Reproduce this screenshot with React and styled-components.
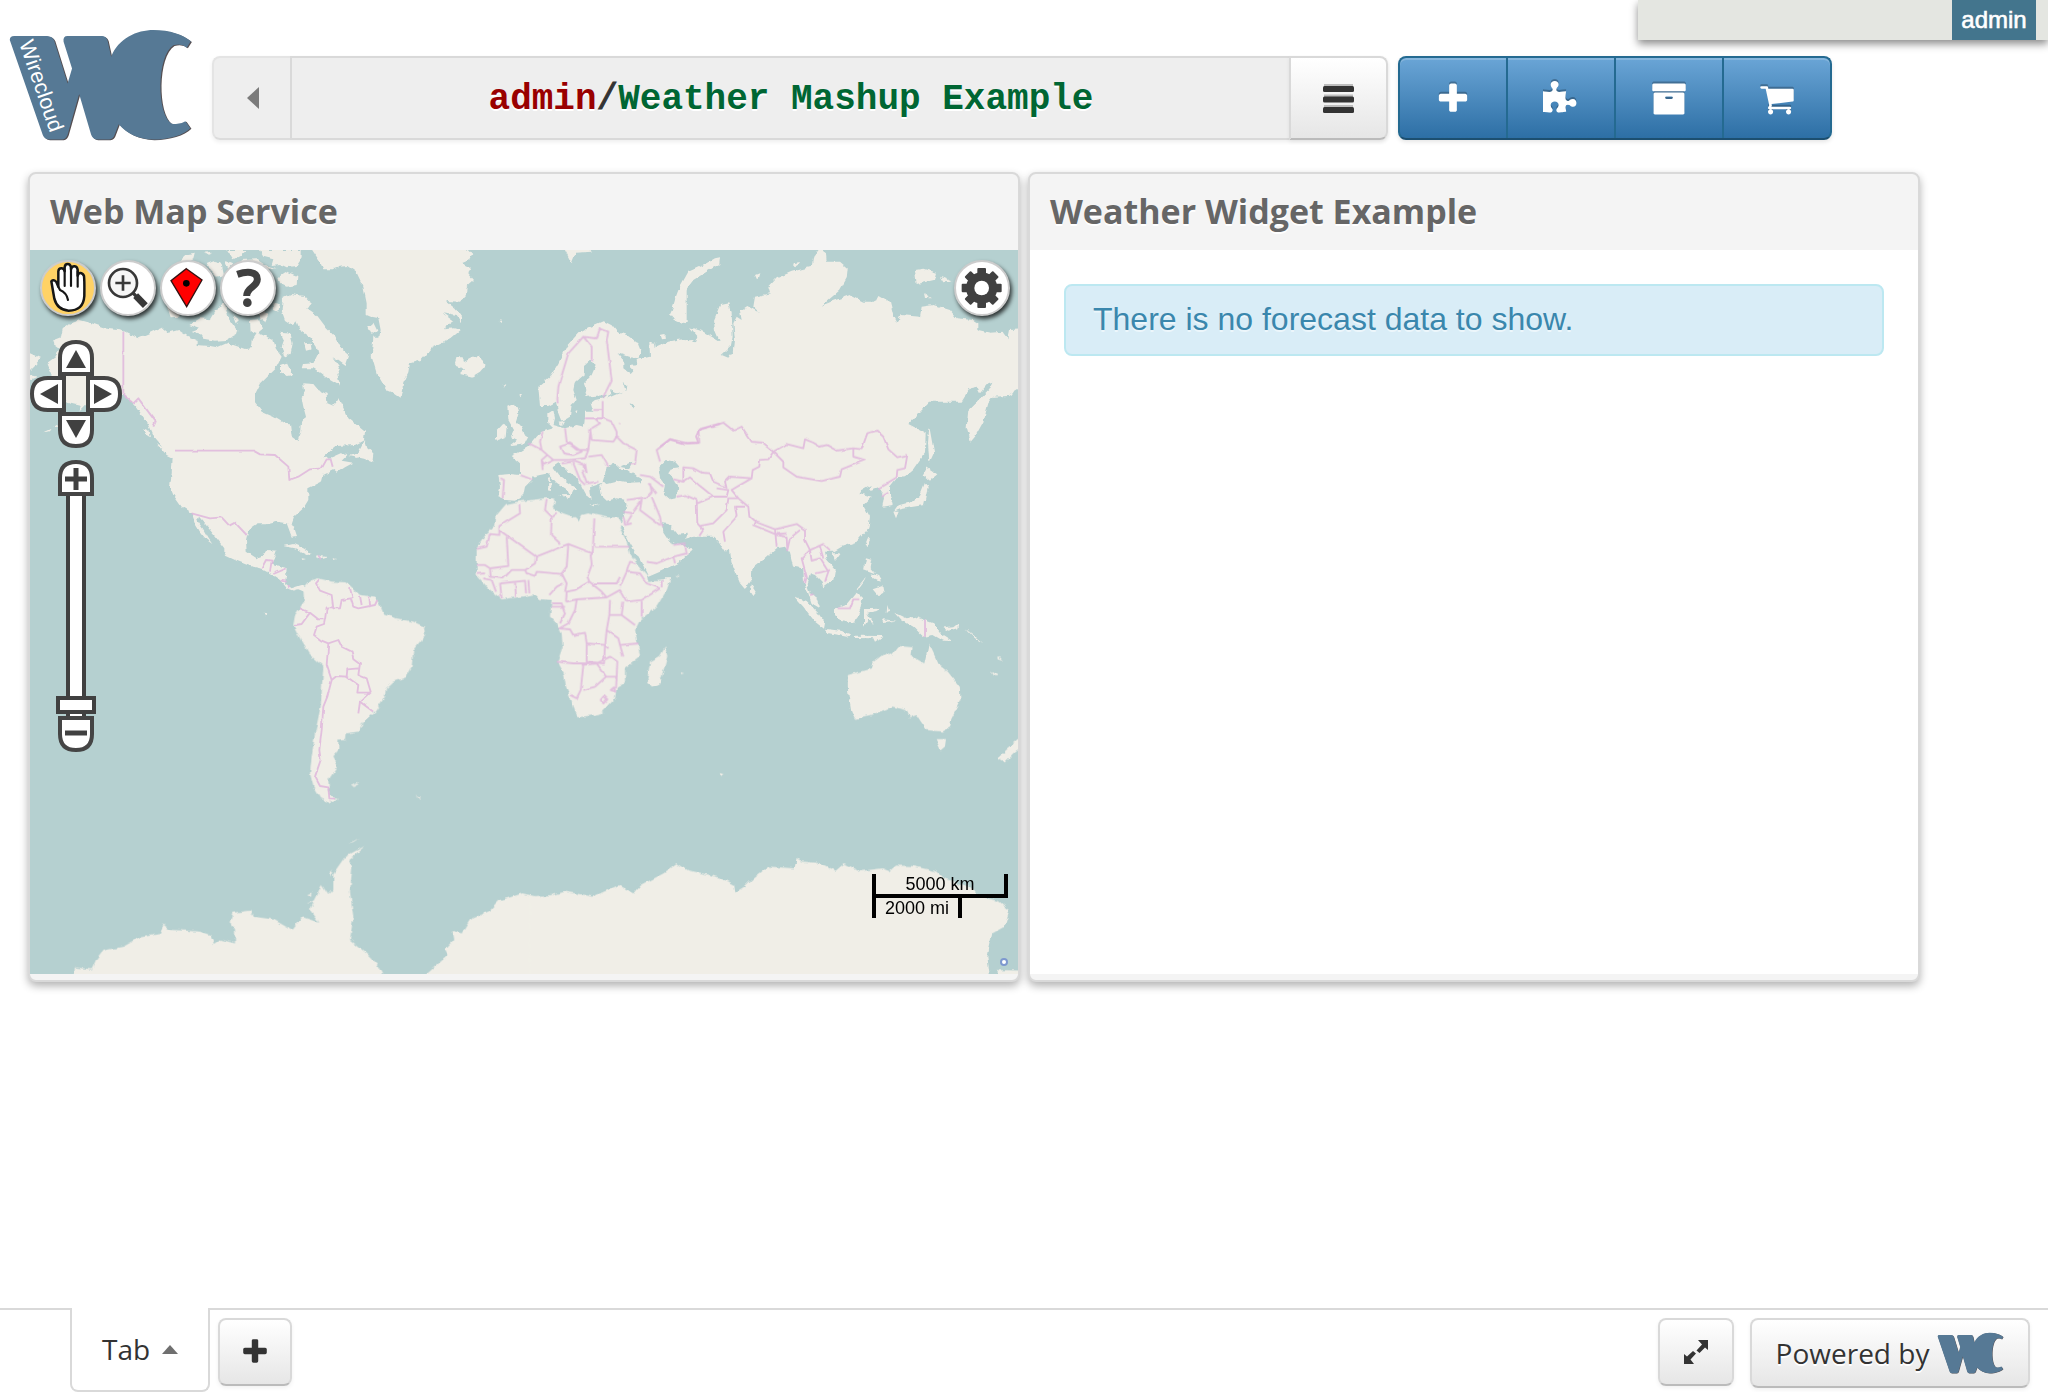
import React from 'react';
import styled, { createGlobalStyle } from 'styled-components';

const GlobalStyle = createGlobalStyle`
  *, *::before, *::after { box-sizing: border-box; }
  body { margin: 0; background: #fff; overflow: hidden; }
`;

const sans = '"Liberation Sans", Arial, Helvetica, sans-serif';
const openSans = '"Open Sans", "Noto Sans", sans-serif';

const Page = styled.div`
  width: 2048px;
  height: 1392px;
  display: flex;
  flex-direction: column;
  background: #fff;
  color: #333;
  font-family: ${openSans};
`;

const UserBar = styled.div`
  position: absolute;
  top: 0;
  left: 1638px;
  width: 410px;
  height: 40px;
  display: flex;
  justify-content: flex-end;
  padding-right: 12px;
  background: #e4e6e1;
  box-shadow: 0 4px 8px rgba(0, 0, 0, 0.45);
`;

const UserName = styled.div`
  width: 84px;
  height: 40px;
  text-align: center;
  background: #43758d;
  color: #fff;
  font: 24px/39px ${sans};
  -webkit-text-stroke: 0.6px #fff;
`;

const Header = styled.header`
  display: flex;
  height: 172px;
  padding: 28px 0 0 8px;
  align-items: flex-start;
`;

const LogoBox = styled.div`
  position: relative;
  width: 204px;
  height: 116px;
`;

const LogoLabel = styled.div`
  position: absolute;
  left: 11px;
  top: -4px;
  width: 92px;
  height: 24px;
  color: #fff;
  font: 21.5px/24px ${sans};
  white-space: nowrap;
  transform-origin: 0 19px;
  transform: rotate(71deg);
`;

const Breadcrumb = styled.div`
  display: flex;
  width: 1176px;
  height: 84px;
  margin-top: 28px;
  border-radius: 8px;
  box-shadow: 0 2px 4px rgba(0, 0, 0, 0.07);
`;

const BackButton = styled.div`
  width: 78px;
  display: flex;
  align-items: center;
  justify-content: center;
  padding-left: 2px;
  background: #eee;
  border: 2px solid #e4e4e4;
  border-right: 0;
  border-bottom-color: #dcdcdc;
  border-radius: 8px 0 0 8px;
`;

const PathTitle = styled.div`
  flex: 1;
  background: #eee;
  border: 2px solid #d9d9d9;
  border-width: 2px 0 2px 2px;
  padding: 2px 0 0 1px;
  text-align: center;
  white-space: pre;
  font: bold 36px/80px "Liberation Mono", "Courier New", monospace;
  text-shadow: 0 2px 0 #fff;
`;

const Owner = styled.span`color: #990000;`;
const Workspace = styled.span`color: #006633;`;
const Slash = styled.span`font-weight: normal; -webkit-text-stroke: 1px #333;`;

const LightButton = styled.div`
  display: flex;
  align-items: center;
  justify-content: center;
  width: ${(p) => p.$w}px;
  height: ${(p) => p.$h}px;
  border: 2px solid #d9d9d9;
  border-bottom-color: #bbb;
  border-radius: ${(p) => p.$radius || '8px'};
  background: linear-gradient(#fff, #e6e6e6);
  box-shadow: 0 2px 4px rgba(0, 0, 0, 0.06);
  color: #333;
  font-size: 28px;
`;

const BlueGroup = styled.div`
  display: flex;
  width: 434px;
  height: 84px;
  margin: 28px 0 0 10px;
  border: 2px solid #246a91;
  border-bottom: 2px solid #1c4f70;
  border-radius: 8px;
  overflow: hidden;
  background: linear-gradient(#6aa5d6, #2d6fa5);
  box-shadow: inset 0 2px 0 rgba(255, 255, 255, 0.2), 0 2px 4px rgba(0, 0, 0, 0.1);
`;

const BlueButton = styled.div`
  flex: 1;
  display: flex;
  align-items: center;
  justify-content: center;
  padding-top: 2px;
  & + & { border-left: 2px solid #246a91; }
  svg { filter: drop-shadow(0 -2px 0 rgba(0, 0, 0, 0.25)); }
`;

const Widgets = styled.main`
  display: flex;
  gap: 8px;
  padding-left: 28px;
  flex: 1;
  align-items: flex-start;
`;

const Widget = styled.section`
  width: ${(p) => p.$w}px;
  height: 810px;
  display: flex;
  flex-direction: column;
  border: 2px solid #d9d9d9;
  border-radius: 8px;
  overflow: hidden;
  background: #f4f4f4;
  box-shadow: 0 4px 8px rgba(0, 0, 0, 0.3);
`;

const WidgetTitle = styled.h2`
  margin: 0;
  height: 76px;
  padding-left: 20px;
  color: #666;
  font: bold 34px/74px ${openSans};
  text-shadow: 0 2px 0 #fff;
  white-space: nowrap;
`;

const WidgetBody = styled.div`
  position: relative;
  height: 724px;
  background: #fff;
  padding: ${(p) => (p.$map ? 0 : '34px 34px')};
`;

const Alert = styled.div`
  height: 72px;
  padding-left: 27px;
  border: 2px solid #bce8f1;
  border-radius: 8px;
  background: #d9edf7;
  color: #3a87ad;
  font: 32px/66px ${sans};
  text-shadow: 0 2px 0 rgba(255, 255, 255, 0.5);
`;

const MapTools = styled.div`
  position: absolute;
  top: 10px;
  ${(p) => (p.$right ? 'right: 8px;' : 'left: 10px;')}
  display: flex;
  gap: 4px;
`;

const RoundTool = styled.div`
  width: 56px;
  height: 56px;
  border-radius: 50%;
  border: 2px solid #ccc;
  background: ${(p) => (p.$active ? '#ffd266' : '#fff')};
  box-shadow: 2px 3px 4px rgba(0, 0, 0, 0.75);
  svg { display: block; margin: -2px; }
`;

const Navigation = styled.div`
  position: absolute;
  left: 0;
  top: 90px;
`;

const ScaleLine = styled.div`
  position: absolute;
  left: 842px;
  top: 624px;
  color: #000;
  font: 18px/20px ${sans};
  text-align: center;
`;

const ScaleTop = styled.div`
  width: 136px;
  height: 24px;
  border: 4px solid #000;
  border-top: 0;
`;

const ScaleBottom = styled.div`
  width: 90px;
  height: 20px;
  border: 4px solid #000;
  border-width: 0 4px;
`;

const MapDot = styled.div`
  position: absolute;
  left: 970px;
  top: 708px;
  width: 8px;
  height: 8px;
  border: 2px solid #7d98cf;
  border-radius: 50%;
  background: #fff;
`;

const Footer = styled.footer`
  display: flex;
  height: 84px;
  align-items: flex-start;
`;

const Rule = styled.div`
  width: ${(p) => p.$w || 'auto'};
  flex: ${(p) => (p.$w ? 'none' : 1)};
  height: 84px;
  border-top: 2px solid #d9d9d9;
  display: flex;
  padding: 8px 18px 0 8px;
`;

const Tab = styled.div`
  width: 140px;
  height: 84px;
  display: flex;
  align-items: center;
  gap: 12px;
  padding: 0 0 0 30px;
  border: 2px solid #d9d9d9;
  border-top: 0;
  border-radius: 0 0 8px 8px;
  font-size: 28px;
`;

const Spacer = styled.div`flex: 1;`;

const Powered = styled.div`
  display: flex;
  margin-left: 16px;
  svg { margin-left: 8px; }
  span { text-shadow: 0 2px 0 #fff; }
`;

function Glyph({ d, size = 36, color = '#fff' }) {
  return <svg width={size} height={size} viewBox="0 0 1792 1792"><path fill={color} d={d} /></svg>;
}

const plus = 'M1600 736v192q0 40-28 68t-68 28h-416v416q0 40-28 68t-68 28h-192q-40 0-68-28t-28-68v-416h-416q-40 0-68-28t-28-68v-192q0-40 28-68t68-28h416v-416q0-40 28-68t68-28h192q40 0 68 28t28 68v416h416q40 0 68 28t28 68z';
const puzzle = 'M1664 1098q0 81-44.5 135t-123.5 54q-41 0-77.5-17.5t-59-38-56.5-38-71-17.5q-110 0-110 124 0 39 16 115t15 115v5q-22 0-33 1-34 3-97.5 11.5t-115.5 13.5-98 5q-61 0-103-26.5t-42-83.5q0-37 17.5-71t38-56.5 38-59 17.5-77.5q0-79-54-123.5t-135-44.5q-84 0-143 45.5t-59 127.5q0 43 15 83t33.5 64.5 33.5 53 15 50.5q0 45-46 89-37 35-117 35-95 0-245-24-9-2-27.5-4t-27.5-4l-13-2q-1 0-3-1-2 0-2-1v-1024q2 1 17.5 3.5t34 5 21.5 3.5q150 24 245 24 80 0 117-35 46-44 46-89 0-22-15-50.5t-33.5-53-33.5-64.5-15-83q0-82 59-127.5t144-45.5q80 0 134 44.5t54 123.5q0 41-17.5 77.5t-38 59-38 56.5-17.5 71q0 57 42 83.5t103 26.5q64 0 180-15t163-17v2q-1 2-3.5 17.5t-5 34-3.5 21.5q-24 150-24 245 0 80 35 117 44 46 89 46 22 0 50.5-15t53-33.5 64.5-33.5 83-15q82 0 127.5 59t45.5 143z';
const archive = 'M1088 832q0-26-19-45t-45-19h-256q-26 0-45 19t-19 45 19 45 45 19h256q26 0 45-19t19-45zm576-192v960q0 26-19 45t-45 19h-1408q-26 0-45-19t-19-45v-960q0-26 19-45t45-19h1408q26 0 45 19t19 45zm64-448v256q0 26-19 45t-45 19h-1536q-26 0-45-19t-19-45v-256q0-26 19-45t45-19h1536q26 0 45 19t19 45z';
const cart = 'M704 1536q0 52-38 90t-90 38-90-38-38-90 38-90 90-38 90 38 38 90zm896 0q0 52-38 90t-90 38-90-38-38-90 38-90 90-38 90 38 38 90zm128-1088v512q0 24-16.5 42.5t-40.5 21.5l-1044 122q13 60 13 70 0 16-24 64h920q26 0 45 19t19 45-19 45-45 19h-1024q-26 0-45-19t-19-45q0-11 8-31.5t16-36 21.5-40 15.5-29.5l-177-823h-204q-26 0-45-19t-19-45 19-45 45-19h256q16 0 28.5 6.5t19.5 15.5 13 24.5 8 26 5.5 29.5 4.5 26h1201q26 0 45 19t19 45z';

const mark = 'M22 120Q22 108 32 108H106Q118 109 122 122L152 250L162 205L143 125Q141 108 152 108H230Q240 110 242 122L250 170C266 115 308 90 345 90C382 90 412 104 429 124L420 143Q408 129 390 136C352 168 352 340 385 370Q402 376 417 363L428 384C412 405 380 418 345 418C310 416 285 400 267 372L258 403Q255 416 246 418H218Q208 416 205 404L178 282L152 404Q149 416 141 418H110Q99 416 96 404Z';

function Logo({ width, height }) {
  return (
    <svg width={width} height={height} viewBox="18 84 416 340" preserveAspectRatio="none">
      <path d={mark} transform="translate(2.500 2)" fill="#554e51" />
      <path d={mark} fill="#567995" />
    </svg>
  );
}

function WorldMap() {
  return (
    <svg width="988" height="724" viewBox="30 250 988 724" style={{ display: 'block' }}>
      <defs>
        <filter id="coast" filterUnits="userSpaceOnUse" x="10" y="230" width="1030" height="770">
          <feTurbulence type="fractalNoise" baseFrequency="0.16" numOctaves="2" seed="4" result="n" />
          <feDisplacementMap in="SourceGraphic" in2="n" scale="4.500" xChannelSelector="R" yChannelSelector="G" />
          <feGaussianBlur stdDeviation="0.7" />
        </filter>
        <filter id="frontier" filterUnits="userSpaceOnUse" x="10" y="230" width="1030" height="770">
          <feTurbulence type="fractalNoise" baseFrequency="0.12" numOctaves="1" seed="9" result="n" />
          <feDisplacementMap in="SourceGraphic" in2="n" scale="3" xChannelSelector="R" yChannelSelector="G" />
          <feGaussianBlur stdDeviation="0.4" />
        </filter>
      </defs>
      <rect x="30" y="250" width="988" height="724" fill="#b5d0d0" />
      <g filter="url(#coast)" fill="#f0eee7">
        {/* North America */}
        <g transform="translate(20 240) scale(.33333)">
          <path d="M80 370L105 352 122 325 95 305 122 295 128 268 150 250 180 240 215 250 250 262 300 268 325 280 352 294 390 278 425 262 445 278 475 270 502 288 530 300 530 315 570 318 592 322 620 310 640 315 675 327 695 325 698 300 712 278 740 290 760 300 770 330 785 350 770 380 750 400 735 415 720 430 705 460 705 490 725 515 760 530 790 548 810 550 815 590 832 602 840 580 842 555 858 530 850 500 845 475 852 450 850 430 880 432 895 450 920 462 922 490 940 497 958 475 970 500 985 535 1010 555 1035 575 1032 600 1005 615 950 618 925 638 905 655 935 652 962 640 985 642 965 662 1000 668 975 682 950 698 940 690 910 705 905 725 865 745 865 780 850 805 822 830 815 850 828 888 815 890 800 850 770 845 740 853 710 853 685 870 678 900 680 935 710 955 735 945 745 930 770 932 762 955 755 970 800 985 798 1010 795 1030 815 1045 845 1035 860 1045 855 1056 835 1048 820 1052 800 1045 780 1020 762 1008 740 995 720 985 690 978 650 962 613 945 613 925 590 895 570 870 550 845 537 830 532 842 550 868 565 895 577 912 560 900 540 875 528 855 515 820 485 800 460 765 450 740 455 700 458 655 430 625 400 590 380 545 345 495 310 465 270 460 230 465 200 492 175 518 182 498 140 488 110 440Z" />
          <path d="M30 340L62 355 45 375 30 390ZM30 405L55 410 30 420ZM70 578L95 566 90 574ZM100 562L125 545 115 560ZM372 565L385 570 390 592 380 585ZM410 612L440 630 460 655 440 645ZM792 918L820 912 850 925 875 940 860 942 825 925ZM890 946L925 952 905 958 888 952ZM1035 600L1008 650 1035 656 1057 665 1060 640 1042 625ZM728 1118L742 1120 736 1126ZM845 955L858 957 847 960ZM938 955L952 957 940 960ZM1015 640L985 648 1015 655Z" />
        </g>
        {/* Arctic archipelago */}
        <g transform="translate(100 240) scale(.33333)">
          <path d="M268 255L300 235 330 238 350 205 375 190 385 235 412 272 408 285 380 300 345 302 310 296 300 284 275 276 300 266ZM198 190L240 205 238 230 212 232ZM548 175L575 162 612 168 632 190 622 205 650 225 680 265 705 290 722 322 748 345 737 378 715 362 698 352 720 382 712 402 720 438 690 420 665 400 640 385 608 385 612 372 640 370 655 340 650 320 630 290 600 270 590 245 578 255 555 240 545 212ZM540 275L570 278 578 310 572 342 552 350 545 320 552 300ZM540 375L560 368 578 405 560 408 540 395ZM450 240L478 238 486 268 470 282 452 275ZM535 112L560 95 592 108 590 135 560 140 540 132ZM478 30L605 30 605 55 590 78 560 82 540 72 515 75 520 58 490 50ZM240 62L262 42 285 38 280 58 262 68ZM312 38L335 35 328 48ZM320 72L345 62 365 75 372 105 350 110 330 90ZM382 30L440 30 425 45 400 58ZM375 60L400 70 385 85ZM420 60L470 58 495 75 530 85 480 88ZM520 185L540 190 535 215 522 210ZM490 165L515 150 520 180 500 185ZM612 310L632 308 635 328 618 332ZM480 205L505 225 495 245 480 235ZM400 225L420 240 410 250Z" />
        </g>
        {/* Greenland, Europe and Iceland */}
        <g transform="translate(340 240) scale(.33333)">
          <path d="M-90 20L-62 62 -50 88 -20 88 0 80 22 78 50 98 70 140 80 190 80 225 92 230 115 235 122 270 118 290 100 290 95 350 110 400 140 450 160 458 182 473 190 430 205 400 210 370 245 360 275 325 330 298 365 268 345 262 310 265 340 243 308 220 350 228 366 250 366 230 345 205 318 183 360 185 378 165 380 140 402 120 385 100 395 85 365 70 388 60 397 45 375 20Z" />
          <path d="M85 262L100 248 112 272 95 285ZM345 368L350 352 368 352 372 366 395 354 420 350 437 375 420 395 395 410 360 402 375 388 348 378ZM670 20L745 20 755 35 708 38 695 70 685 50ZM990 220L1005 190 1020 155 1040 140 1040 250 1015 240ZM962 285L975 283 978 296 966 298Z" />
          <path d="M600 498L595 440 630 410 655 370 680 318 715 280 750 260 790 243 815 256 830 275 860 285 895 310 905 335 895 355 870 352 833 340 850 360 850 385 872 402 880 394 868 378 892 376 890 360 930 350 928 305 945 308 950 340 980 318 1000 307 1060 300 1060 890 1020 900 990 912 1025 915 1060 930 1020 965 960 995 925 1010 915 990 900 960 870 910 850 870 845 850 855 820 860 790 855 780 830 775 800 782 782 765 778 740 788 728 770 735 750 742 755 780 738 766 725 742 715 715 690 698 672 682 655 670 638 682 655 705 680 725 710 745 697 750 690 766 680 748 650 728 625 700 600 705 578 710 575 720 555 740 550 765 525 782 495 780 475 772 480 740 475 705 510 702 540 705 540 670 515 648 540 635 565 620 590 590 605 575 640 565 625 550 625 520 640 510 645 535 640 555 675 565 710 555 732 560 735 530 735 515 760 515 752 490 765 480 790 475 802 464 740 470 732 430 755 405 768 375 750 362 735 375 735 400 705 425 700 450 710 480 695 495 690 530 665 545 655 520 648 485 625 498Z" />
          <path d="M502 500L525 490 535 520 528 542 545 560 550 580 565 590 555 610 510 616 530 600 513 592 522 570 505 540ZM468 572L490 548 500 560 497 592 468 602ZM624 714L633 712 632 728 626 728ZM624 733L635 732 632 752 625 752ZM658 766L688 765 682 778ZM748 792L778 795 760 799ZM655 548L672 545 665 558ZM706 510L712 508 710 518ZM476 240L485 238 482 246ZM488 432L496 434 492 440ZM538 463L546 466 541 472Z" />
        </g>
        {/* Africa */}
        <g transform="translate(460 400) scale(.33333)">
          <path d="M138 312L175 305 255 295 280 295 285 305 278 325 310 340 345 352 355 362 365 345 385 340 440 352 475 352 490 375 478 382 500 425 510 460 530 490 560 525 565 546 610 540 632 535 620 570 590 620 540 660 525 690 535 740 540 770 495 805 495 850 470 865 465 895 425 940 400 945 355 952 345 930 330 890 318 860 312 820 293 785 308 740 305 700 290 670 270 650 275 600 240 597 225 583 185 590 125 598 85 565 50 525 50 490 50 445 80 400 105 375 110 345Z" />
          <path d="M615 742L622 768 600 850 575 860 562 840 570 785 600 768ZM648 526L656 529 650 533Z" />
        </g>
        {/* Asia */}
        <g transform="translate(660 240) scale(.33333)">
          <path d="M-20 325L25 305 50 300 75 297 105 307 112 288 90 262 130 275 180 305 165 270 162 240 180 195 205 190 215 220 218 290 212 320 185 345 205 353 222 330 225 300 220 250 230 230 245 240 240 212 262 198 300 220 280 200 285 170 330 160 325 142 350 115 395 95 455 80 460 50 480 25 498 40 500 65 540 65 563 85 560 115 540 150 485 197 520 182 570 165 610 185 645 185 655 165 690 185 700 225 712 248 722 225 780 230 785 200 820 195 870 210 890 235 940 240 955 250 955 270 990 278 1030 275 1045 295 1050 270 1090 268 1090 440 1045 468 1000 470 985 490 970 545 945 590 932 605 920 560 925 510 955 480 985 450 997 425 985 430 960 460 950 440 930 445 905 485 850 485 810 485 745 552 780 570 797 580 795 640 760 690 735 712 710 715 690 740 690 765 698 795 670 800 675 770 655 745 625 755 635 735 595 758 635 770 610 795 630 830 625 865 590 905 545 920 520 935 495 935 500 960 525 990 520 1020 490 1042 485 1025 465 1005 450 1000 440 1030 450 1060 470 1075 480 1105 455 1090 445 1060 432 1030 430 985 400 980 390 940 375 920 350 925 310 960 277 985 275 1020 255 1048 240 1030 215 970 210 930 195 935 175 905 160 890 80 890 0 870 -20 850Z" />
          <path d="M180 52L178 72 140 95 100 120 70 160 68 215 80 250 50 245 33 220 45 180 60 140 85 95 130 75 165 55ZM765 90L790 86 828 98 822 120 770 132ZM840 110L878 125 850 127ZM792 160L816 175 795 174ZM808 560L822 638 808 668 804 610ZM800 682L832 703 810 722 788 705ZM795 728L803 745 792 795 750 802 720 808 702 815 716 796 755 785 780 765ZM700 815L716 815 708 835ZM625 890L633 900 622 922 617 910ZM518 940L540 940 525 960ZM618 955L636 960 632 985 645 1000 612 988ZM638 1048L667 1038 671 1060 655 1068ZM632 1000L660 1010 662 1025 640 1015ZM590 1045L618 1010 612 1022 594 1048ZM275 1033L290 1055 280 1068 272 1055ZM403 1070L440 1083 475 1120 495 1150 492 1166 465 1145 430 1100ZM495 1166L540 1172 575 1184 560 1190 500 1178ZM585 1187L670 1188 645 1205 640 1195 585 1194ZM525 1105L560 1095 590 1058 607 1075 600 1110 585 1148 540 1140 525 1125ZM612 1108L658 1106 655 1112 622 1118 642 1155 625 1138 612 1160ZM682 1095L688 1115 680 1118ZM668 1138L710 1142 672 1146ZM706 1118L740 1135 765 1130 820 1150 840 1180 877 1203 850 1202 820 1185 790 1190 760 1160 725 1140ZM850 1165L880 1162 895 1150 892 1165 865 1172ZM915 1165L940 1185 970 1210 945 1195ZM2 285L18 283 12 298ZM285 105L298 100 292 120ZM400 70L420 66 410 82ZM0 1050L15 1015 30 1015 15 1060Z" />
        </g>
        {/* South America */}
        <g transform="translate(250 520) scale(.33333)">
          <path d="M160 205L180 182 205 175 245 185 290 187 330 225 375 230 393 262 400 280 440 295 490 305 522 320 525 345 490 390 485 440 468 472 430 485 408 505 405 530 375 575 340 605 325 635 290 640 288 660 265 662 265 690 247 712 262 740 235 780 238 825 264 838 238 848 210 835 190 800 180 760 185 710 195 640 212 560 220 440 180 405 150 355 130 315 135 285 162 245Z" />
          <path d="M302 793L325 786 328 793 312 802ZM500 824L515 832 512 840Z" opacity=".8" />
        </g>
        {/* Oceania and eastern Antarctica */}
        <g transform="translate(500 640) scale(.3444 .33333)">
          <path d="M1010 105L1080 85 1085 65 1120 38 1140 45 1160 18 1198 22 1195 48 1232 70 1245 10 1275 75 1300 95 1335 140 1337 180 1310 235 1307 262 1285 275 1240 270 1222 245 1210 225 1190 232 1180 210 1140 200 1085 222 1030 237 1020 215 1010 150ZM1265 297L1295 297 1292 320 1280 330ZM1520 285L1475 325 1445 355 1465 368 1490 340 1520 315ZM1425 92L1447 108 1435 108ZM1447 45L1460 62 1448 55ZM638 396L650 400 642 408ZM525 97L535 100 526 102Z" />
          <path d="M0 782L65 760 100 768 150 765 190 755 270 770 345 735 390 760 410 735 475 700 515 670 545 690 640 713 680 735 683 757 710 740 735 715 780 680 855 685 862 655 880 665 930 670 975 692 1000 670 1045 693 1110 685 1130 693 1150 677 1200 678 1270 695 1290 715 1360 740 1400 770 1450 785 1480 810 1465 860 1430 880 1415 950 1425 1030 0 1030ZM1445 990L1520 992 1520 1030 1445 1030Z" />
        </g>
        {/* Western Antarctica */}
        <g transform="translate(20 740) scale(.33333)">
          <path d="M160 720L165 682 215 688 230 655 248 632 310 620 360 592 420 582 430 553 450 570 500 572 540 575 570 585 582 612 600 598 645 610 645 570 632 550 640 518 690 512 700 530 760 538 815 570 835 545 850 532 898 548 870 510 890 470 905 435 925 465 940 450 940 400 975 350 1035 318 1015 335 985 360 997 380 990 455 1000 530 990 600 1040 640 1070 670 1095 720ZM1200 720L1285 645 1275 628 1300 600 1295 572 1325 580 1350 540 1410 512 1440 480 1500 470 1530 466 1530 720ZM860 490L888 480 880 488ZM925 400L938 388 930 410ZM985 310L1020 293 1000 306ZM862 462L875 458 872 468Z" />
        </g>
        {/* Inland seas */}
        <g transform="translate(340 240) scale(.33333)" fill="#b5d0d0">
          <path d="M800 680L820 668 835 682 845 690 862 690 875 700 905 715 900 727 870 728 840 722 800 732 788 728 795 705ZM838 680L882 662 868 686ZM955 685L980 660 1005 665 1020 682 995 685 985 700 1000 720 1015 740 1010 775 990 778 970 760 975 735 960 715ZM965 850L985 852 1010 882 1040 878 1040 892 1018 908 990 905 970 875ZM848 425L862 440 858 455ZM810 448L832 460 815 468ZM872 490L885 495 878 504ZM812 465L850 455 805 475Z" />
        </g>
      </g>
      <g filter="url(#frontier)" fill="none" stroke="#dfb6dc" strokeOpacity=".85" strokeWidth="5.500" strokeLinejoin="round">
        <g transform="translate(20 240) scale(.33333)">
          <path d="M310 275V465L340 490 355 475 407 545 400 560M465 632H700L720 643 765 645 805 680 808 720 835 710 870 688 905 685 920 658 932 658 938 680M515 820L570 835 605 832 628 857 645 848 680 885M725 985L738 960 755 962 750 995M760 1002L800 985M782 1022L800 1025M805 1035L808 1045" />
        </g>
        <g transform="translate(250 520) scale(.33333)">
          <path d="M208 178L198 190 210 212 245 225 250 265 270 265 275 240 302 235 310 260 325 265 375 255 382 240M300 205L308 235M330 228L335 255M358 230L360 255M150 265L180 278 205 298 225 298 230 262 250 262M135 315L155 312 180 278M225 298L222 312 200 320 192 345 215 362 235 370 265 360 275 380 305 395 310 415 330 430 325 465 350 475 362 515 330 545 370 575M235 370L230 435 245 480 232 530 220 560 215 630 208 690 212 720 195 770 210 798 235 802 238 835 255 836M245 480L260 468 290 470 292 448 325 445M290 470L325 495 322 518 360 518M330 545L325 580M205 105L212 118" />
        </g>
        <g transform="translate(460 400) scale(.33333)">
          <path d="M178 312L180 340 118 378 118 405 90 402 80 440 50 447M118 390L228 470 325 432 398 460 403 355M260 297L255 330 275 350 273 405 300 430M275 350L290 338M405 440H508M398 460L392 465 395 495 382 530 388 545 345 570 320 575 318 605M325 432L320 500 305 520 320 550 315 575M228 470L225 490 195 510 200 520 225 528 230 515 305 522M140 410L145 498 90 505 75 495 50 495M90 505L92 530 130 535 155 510 195 510M50 522L75 520M70 535L95 540 108 575M120 548L125 595M165 545L168 590M122 550L195 542 198 580M205 540L208 580M268 585L290 560 310 550M275 610H305L315 640 300 670M275 620H315M318 605L350 598 440 592 425 575 388 545M350 600L345 630 325 670 298 685 330 688 340 705 375 698 380 730 435 735 432 790 380 785V730M293 785L340 790 415 790M370 795L362 870 350 895 330 885M365 795L410 790 438 830 405 860 370 870M410 790L450 770 472 785 470 830 438 830M440 592L480 570 500 605 545 600 600 565 560 550 540 520 500 515 480 560M400 550L470 550 480 530M500 515L510 485 530 490M545 603V650M450 600L448 645 485 645 490 605M485 645L525 675M448 645L440 690 435 740M440 690L475 715 480 735 535 730M480 735L490 770M422 900L432 888 442 898 430 910ZM452 870L462 862 466 875ZM608 540V562M470 830L468 865M435 735L445 745" />
          <path d="M118 235L132 240 128 295M180 225L215 238M207 130L245 150 262 165 245 180 248 210M245 150L240 125 248 95M315 85L320 125 350 150 385 150 392 85M300 140L330 130 365 155 340 165 310 160ZM262 165L280 180 250 195 245 180M280 180L330 180 375 175 385 150M305 190L345 185 370 195 375 215M340 190L360 240 375 255M365 210L380 250 415 245M375 190L380 220M390 85L395 120 460 125 470 110M375 55L405 55 420 70 395 85M405 55L430 55 455 65 470 95 470 110 490 130 530 150 525 190 510 190M385 170L425 165 445 200M428 0V55M400 30H428M293 10L292 -5 295 -40 325 -140 370 -190 395 -160 395 -120M370 -190L410 -185 420 -215 445 -205 440 -180 455 -60 430 -10M600 185L590 150 630 118 680 130 718 128 715 90 780 72M540 225L570 230 610 260M565 250L590 280M500 300L560 292 575 275 570 250M490 335L515 340 545 300 540 330 600 375M500 370L515 345M490 350L495 375 515 370M575 290L600 350 605 380M560 485L590 490 640 470 680 460 675 430 640 435M640 470L645 490M480 70L478 72" />
        </g>
        <g transform="translate(660 240) scale(.33333)">
          <path d="M0 620L30 598 70 610 115 608 108 590 118 568 190 548 220 572 245 560 275 605 305 608 340 635 380 612 430 625 435 598 460 608 480 620 500 615 530 632 580 625 605 628 622 580 650 572 670 590 685 628 712 652 742 645 735 685 712 690 710 712 655 745M340 635L370 665 370 682 410 710 485 723 540 710 545 688 615 660 580 650 580 625M340 635L325 658 300 660 298 680 278 690 275 715 215 750 235 775 265 800 268 830 285 845 345 868 410 852 435 870 435 900 450 930 490 912 510 930M285 845L280 855 345 882 380 880M345 868L350 920M350 885L380 890 382 930 390 895 420 870M275 715L210 710 195 725 200 745M70 725V682L100 685 125 698 150 700 160 725 195 740M40 718L70 725 90 712 120 738 160 770 200 770 205 750 170 745M50 770L75 765 110 780 112 850 130 870 118 888M112 790L160 770M118 858L160 850 200 810 205 775H235M195 905L190 875 230 830 225 800 255 800M450 930L425 955 440 1010 435 1030M450 930L455 962 480 955 505 995 495 1025M465 1000L510 990M480 920L490 955M665 770L685 758M530 1105L570 1105 580 1078 598 1078M795 1138V1190M450 1065L460 1062" />
        </g>
      </g>
    </svg>
  );
}

function HandIcon() {
  return (
    <svg width="56" height="56" viewBox="0 0 168 168">
      <path d="M34 64q7-7 15 2l6 14V34q1-9 9-9t10 9V22q1-10 9-10t10 10v6q2-9 10-9t10 10v18q2-9 9-8t10 9c2 20 1 40 1 60q-3 44-47 44-34-2-43-36Z" fill="#fff" stroke="#161616" strokeWidth="7.500" strokeLinejoin="round" />
      <path d="M74 32V78M93 22V78M113 34V80M55 80l5 10q20 8 24 30" fill="none" stroke="#161616" strokeWidth="6.500" strokeLinecap="round" />
    </svg>
  );
}

function MagnifierIcon() {
  return (
    <svg width="56" height="56" viewBox="0 0 168 168">
      <g fill="none" stroke="#383838">
        <circle cx="69" cy="69" r="42" strokeWidth="8" fill="#f6f6f6" />
        <path d="M69 46V92M46 69H92" strokeWidth="8" />
        <path d="M99 99L112 112" strokeWidth="10" />
        <path d="M107 107L136 137" strokeWidth="20" />
      </g>
    </svg>
  );
}

function MarkerIcon() {
  return (
    <svg width="56" height="56" viewBox="0 0 168 168">
      <path d="M79 26L126 60 80 140 33 62Z" fill="#f00" stroke="#331111" strokeWidth="4" />
      <circle cx="79" cy="70" r="10" />
    </svg>
  );
}

function HelpIcon() {
  return (
    <svg width="56" height="56" viewBox="0 0 168 168">
      <path d="M52 43C78 34 112 32 112 58C112 82 80 80 80 108" fill="none" stroke="#404040" strokeWidth="21" />
      <circle cx="82" cy="128" r="13" fill="#404040" />
    </svg>
  );
}

function GearIcon() {
  return (
    <svg width="56" height="56" viewBox="-84 -84 168 168">
      <g fill="#404040" transform="translate(-1 0)">
        {[0, 45, 90, 135].map((a) => <rect key={a} x="-13" y="-60" width="26" height="120" rx="3" transform={`rotate(${a})`} />)}
        <circle r="47" />
        <circle r="22" fill="#fff" />
      </g>
    </svg>
  );
}

function NavigationControls() {
  const cap = 'M2 34V18Q2 2 18 2Q34 2 34 18V34Z';
  const arrow = 'M18 10L28 28H8Z';
  const directions = [
    'translate(28 0)',
    'translate(0 72) rotate(-90)',
    'translate(92 36) rotate(90)',
    'translate(64 108) rotate(180)',
  ];
  return (
    <svg width="100" height="416" viewBox="0 0 100 416">
      <rect x="38" y="150" width="16" height="230" fill="#fff" stroke="#404040" strokeWidth="4" />
      {directions.map((t) => (
        <g key={t} transform={t}>
          <path d={cap} fill="#fff" stroke="#454545" strokeWidth="4" />
          <path d={arrow} fill="#404040" />
        </g>
      ))}
      <g transform="translate(28 120)">
        <path d={cap} fill="#fff" stroke="#454545" strokeWidth="4" />
        <path d="M18 8V30M7 19H29" stroke="#404040" strokeWidth="5" />
      </g>
      <g transform="translate(64 412) rotate(180)">
        <path d={cap} fill="#fff" stroke="#454545" strokeWidth="4" />
        <path d="M7 19H29" stroke="#404040" strokeWidth="5" />
      </g>
      <rect x="28" y="358" width="36" height="14" fill="#fff" stroke="#404040" strokeWidth="4" />
    </svg>
  );
}

export default function App() {
  return (
    <Page>
      <GlobalStyle />
      <UserBar><UserName>admin</UserName></UserBar>
      <Header>
        <LogoBox>
          <Logo width={185} height={113.5} />
          <LogoLabel>Wirecloud</LogoLabel>
        </LogoBox>
        <Breadcrumb>
          <BackButton>
            <svg width="12" height="22" viewBox="0 0 12 22"><path d="M12 0V22L0 11Z" fill="#7b7b7b" /></svg>
          </BackButton>
          <PathTitle><Owner>admin</Owner><Slash>/</Slash><Workspace>Weather Mashup Example</Workspace></PathTitle>
          <LightButton $w={99} $h={84} $radius="0 8px 8px 0">
            <svg width="31" height="30" viewBox="0 -2 31 30">
              <path d="M1 -1H30V4H1ZM1 9.500H30V14H1ZM1 20H30V24H1Z" fill="#bdbdbd" />
              <g fill="#333">
                <rect y="1" width="31" height="6" rx="1.500" />
                <rect y="11.500" width="31" height="6" rx="1.500" />
                <rect y="22" width="31" height="6" rx="1.500" />
              </g>
            </svg>
          </LightButton>
        </Breadcrumb>
        <BlueGroup>
          <BlueButton><Glyph d={plus} /></BlueButton>
          <BlueButton><Glyph d={puzzle} /></BlueButton>
          <BlueButton><Glyph d={archive} /></BlueButton>
          <BlueButton><Glyph d={cart} /></BlueButton>
        </BlueGroup>
      </Header>
      <Widgets>
        <Widget $w={992}>
          <WidgetTitle>Web Map Service</WidgetTitle>
          <WidgetBody $map>
            <WorldMap />
            <MapTools>
              <RoundTool $active><HandIcon /></RoundTool>
              <RoundTool><MagnifierIcon /></RoundTool>
              <RoundTool><MarkerIcon /></RoundTool>
              <RoundTool><HelpIcon /></RoundTool>
            </MapTools>
            <MapTools $right><RoundTool><GearIcon /></RoundTool></MapTools>
            <Navigation><NavigationControls /></Navigation>
            <ScaleLine>
              <ScaleTop>5000 km</ScaleTop>
              <ScaleBottom>2000 mi</ScaleBottom>
            </ScaleLine>
            <MapDot />
          </WidgetBody>
        </Widget>
        <Widget $w={892}>
          <WidgetTitle>Weather Widget Example</WidgetTitle>
          <WidgetBody><Alert>There is no forecast data to show.</Alert></WidgetBody>
        </Widget>
      </Widgets>
      <Footer>
        <Rule $w="70px" />
        <Tab>
          Tab
          <svg width="16" height="9" viewBox="0 0 16 9"><path d="M0 9L8 0 16 9Z" fill="#6f6f6f" /></svg>
        </Tab>
        <Rule>
          <LightButton $w={74} $h={68}><Glyph d={plus} size={30} color="#333" /></LightButton>
          <Spacer />
          <LightButton $w={76} $h={68}>
            <svg width="24" height="26" viewBox="0 0 24 26">
              <path d="M14 1H24V11L21 8.500 15.500 14 12.500 11.500 18 5.500ZM0 25V15L3 17.500 9 12 12 14.500 6.500 20.500 10 25Z" fill="#333" />
            </svg>
          </LightButton>
          <Powered>
            <LightButton $w={280} $h={70}><span>Powered by</span><Logo width={67} height={42} /></LightButton>
          </Powered>
        </Rule>
      </Footer>
    </Page>
  );
}
